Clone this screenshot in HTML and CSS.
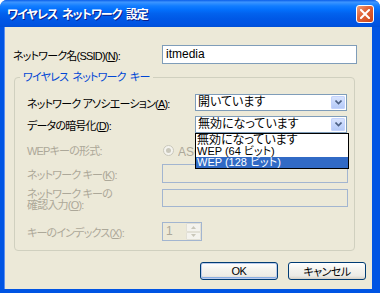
FILE: index.html
```html
<!DOCTYPE html>
<html lang="ja">
<head>
	<meta charset="utf-8">
	<title>ワイヤレス ネットワーク 設定</title>
	<link rel="stylesheet" href="styles.css">
</head>
<body>
   <div class="window">
       <div class="titlebar">
           <span class="title">ワイヤレス ネットワーク 設定</span>
           <span class="close">
               <svg width="10" height="10" viewBox="0 0 10 10"><path d="M1 1 L9 9 M9 1 L1 9" stroke="#fff" stroke-width="2" stroke-linecap="square"/></svg>
           </span>
       </div>

       <div class="client">
           <div class="row ssid-row">
               <label class="lbl">ネットワーク名(SSID)(<u>N</u>):</label>
               <div class="edit">itmedia</div>
           </div>

           <div class="group">
               <span class="group-title">ワイヤレス ネットワーク キー</span>

               <div class="row r-assoc">
                   <label class="lbl">ネットワーク アソシエーション(<u>A</u>):</label>
                   <div class="combo">
                       <span class="combo-text">開いています</span>
                       <span class="combo-btn"><svg width="7" height="5" viewBox="0 0 7 5"><path d="M0.5 0.5 L3.5 3.5 L6.5 0.5" fill="none" stroke="#4d6185" stroke-width="1.6"/></svg></span>
                   </div>
               </div>

               <div class="row r-enc">
                   <label class="lbl">データの暗号化(<u>D</u>):</label>
                   <div class="combo">
                       <span class="combo-text">無効になっています</span>
                       <span class="combo-btn"><svg width="7" height="5" viewBox="0 0 7 5"><path d="M0.5 0.5 L3.5 3.5 L6.5 0.5" fill="none" stroke="#4d6185" stroke-width="1.6"/></svg></span>
                       <ul class="droplist">
                           <li>無効になっています</li>
                           <li>WEP (64 ビット)</li>
                           <li class="selected">WEP (128 ビット)</li>
                       </ul>
                   </div>
               </div>

               <div class="row r-fmt disabled">
                   <label class="lbl">WEPキーの形式:</label>
                   <span class="radio"><span class="dot"></span></span>
                   <span class="radio-text">ASCII 文字</span>
               </div>

               <div class="row r-key disabled">
                   <label class="lbl">ネットワーク キー(<u>K</u>):</label>
                   <div class="edit edit-off"></div>
               </div>

               <div class="row r-confirm disabled">
                   <label class="lbl lbl-2">ネットワーク キーの<br>確認入力(<u>O</u>):</label>
                   <div class="edit edit-off"></div>
               </div>

               <div class="row r-index disabled">
                   <label class="lbl">キーのインデックス(<u>X</u>):</label>
                   <div class="spin">
                       <span class="spin-text">1</span>
                       <span class="spin-btns">
                           <span class="spin-up"><svg width="5" height="3" viewBox="0 0 5 3"><path d="M0 3 L2.5 0 L5 3 Z" fill="#c9c7ba"/></svg></span>
                           <span class="spin-down"><svg width="5" height="3" viewBox="0 0 5 3"><path d="M0 0 L2.5 3 L5 0 Z" fill="#c9c7ba"/></svg></span>
                       </span>
                   </div>
               </div>
           </div>

           <div class="buttons">
               <button class="btn btn-default">OK</button>
               <button class="btn">キャンセル</button>
           </div>
       </div>
   </div>
</body>
</html>
```

FILE: styles.css
```css
body {
	margin: 0;
	padding: 0;
	font-family: 'Liberation Sans', 'Noto Sans CJK JP', sans-serif;
	font-size: 11px;
	font-feature-settings: "palt";
	background-color: #fff;
}

.window {
	width: 380px;
	height: 293px;
	box-sizing: border-box;
	display: flex;
	flex-direction: column;
	background-color: #0054e3;
	border-radius: 7px 7px 0 0;
	overflow: hidden;
}

.titlebar {
	height: 27px;
	flex: none;
	display: flex;
	align-items: center;
	justify-content: space-between;
	padding: 0 6px 0 7px;
	background: linear-gradient(#0a5ee9 0%, #3d95ff 8%, #2a8bff 14%, #127dff 22%, #036ffc 36%, #0262ee 50%, #0058e6 70%, #0054e3 88%, #0050d8 100%);
}

.title {
	color: #fff;
	font-weight: bold;
	font-size: 12px;
	text-shadow: 1px 1px 0 #0a1e8a;
	letter-spacing: -1px;
	word-spacing: 2px;
}

.close {
	width: 18px;
	height: 18px;
	box-sizing: border-box;
	margin-top: 1px;
	display: flex;
	align-items: center;
	justify-content: center;
	border: 1px solid #fff;
	border-radius: 3px;
	background: linear-gradient(135deg, #f0a07e 0%, #e2653a 40%, #cc4517 100%);
}

.client {
	flex: 1;
	margin: 0 8px 4px 4px;
	padding: 18px 0 0 9px;
	background-color: #ece9d8;
	box-shadow: inset 1px 0 0 #5a8ef0;
}

.row {
	display: flex;
	align-items: center;
}

.lbl {
	flex: none;
	width: 135px;
	white-space: nowrap;
	letter-spacing: -0.8px;
}

.ssid-row {
	height: 19px;
}
.ssid-row .lbl {
	width: 149px;
}

.edit {
	box-sizing: border-box;
	width: 195px;
	height: 19px;
	padding: 0 3px;
	line-height: 17px;
	border: 1px solid #7f9db9;
	background-color: #fff;
	font-size: 12px;
}

.edit-off {
	width: 186px;
	background-color: #ece9d8;
	border-color: #a2b5d0;
}

.group {
	position: relative;
	width: 341px;
	height: 174px;
	box-sizing: border-box;
	margin: 13px 0 0 1px;
	padding: 15px 0 0 12px;
	border: 1px solid #d0d0bf;
	border-radius: 4px;
}

.group-title {
	position: absolute;
	top: -7px;
	left: 5px;
	padding: 0 3px;
	line-height: 13px;
	letter-spacing: -0.8px;
	word-spacing: 2px;
	color: #0046d5;
	background-color: #ece9d8;
}

.combo {
	position: relative;
	box-sizing: border-box;
	width: 152px;
	height: 17px;
	margin-left: 33px;
	display: flex;
	align-items: center;
	border: 1px solid #7f9db9;
	background-color: #fff;
}

.combo-text {
	flex: 1;
	padding-left: 2px;
	font-size: 12px;
	line-height: 15px;
}

.combo-btn {
	width: 14px;
	height: 13px;
	margin-right: 1px;
	display: flex;
	align-items: center;
	justify-content: center;
	border-radius: 2px;
	background: linear-gradient(#dce6fd, #c1d3fb 60%, #b3c8f5);
	box-shadow: inset 0 0 0 1px #c3d3fd;
}

.r-assoc {
	height: 17px;
	margin-top: 1px;
}
.r-enc {
	height: 17px;
	margin-top: 5px;
}

.droplist {
	position: absolute;
	top: 16px;
	left: -1px;
	z-index: 2;
	width: 154px;
	box-sizing: border-box;
	margin: 0;
	padding: 0;
	list-style: none;
	border: 1px solid #000;
	background-color: #fff;
	font-size: 11px;
}
.droplist li {
	height: 11px;
	line-height: 11px;
	padding-left: 1px;
	white-space: nowrap;
}
.droplist li:first-child {
	height: 12px;
	line-height: 12px;
	font-size: 12px;
}
.droplist .selected {
	background-color: #316ac5;
	color: #fff;
}

.disabled {
	color: #aca899;
}

.r-fmt {
	height: 20px;
	margin-top: 7px;
}

.radio {
	width: 11px;
	height: 11px;
	box-sizing: border-box;
	margin: 0 4px 0 1px;
	display: flex;
	align-items: center;
	justify-content: center;
	border: 1px solid #cac8bb;
	border-radius: 50%;
	background-color: #f4f3ee;
}
.dot {
	width: 5px;
	height: 5px;
	border-radius: 50%;
	background-color: #cac8bb;
}
/* the open list covers the rest of this label */
.radio-text {
	width: 18px;
	overflow: hidden;
	white-space: nowrap;
	font-size: 12px;
}

.r-key {
	height: 19px;
	margin-top: 4px;
}
.r-key .edit {
	height: 19px;
}

.r-confirm {
	height: 18px;
	margin-top: 6px;
	align-items: flex-start;
}
.r-confirm .edit {
	height: 18px;
}
.lbl-2 {
	line-height: 11px;
}

.r-index {
	height: 19px;
	margin-top: 15px;
}

.spin {
	box-sizing: border-box;
	width: 40px;
	height: 19px;
	display: flex;
	border: 1px solid #a2b5d0;
	background-color: #ece9d8;
}
.spin-text {
	flex: 1;
	padding-left: 3px;
	line-height: 17px;
	font-size: 12px;
}
.spin-btns {
	width: 15px;
	display: flex;
	flex-direction: column;
}
.spin-btns span {
	flex: 1;
	display: flex;
	align-items: center;
	justify-content: center;
	background-color: #f4f3ee;
	border: 1px solid #e2e0d6;
	border-radius: 1px;
}

.buttons {
	display: flex;
	justify-content: flex-end;
	gap: 10px;
	margin: 11px 6px 0 0;
}

.btn {
	width: 78px;
	height: 18px;
	padding: 0;
	font-family: 'Liberation Sans', 'Noto Sans CJK JP', sans-serif;
	font-size: 11px;
	font-feature-settings: "palt";
	letter-spacing: -0.5px;
	color: #000;
	border: 1px solid #003c74;
	border-radius: 3px;
	background: linear-gradient(#ffffff 0%, #f4f3ee 40%, #ecebe6 80%, #d6d0c5 100%);
}

.btn-default {
	box-shadow: inset 0 0 0 1px #bccbeb, inset 0 -1px 0 1px #89ade4;
}
```
